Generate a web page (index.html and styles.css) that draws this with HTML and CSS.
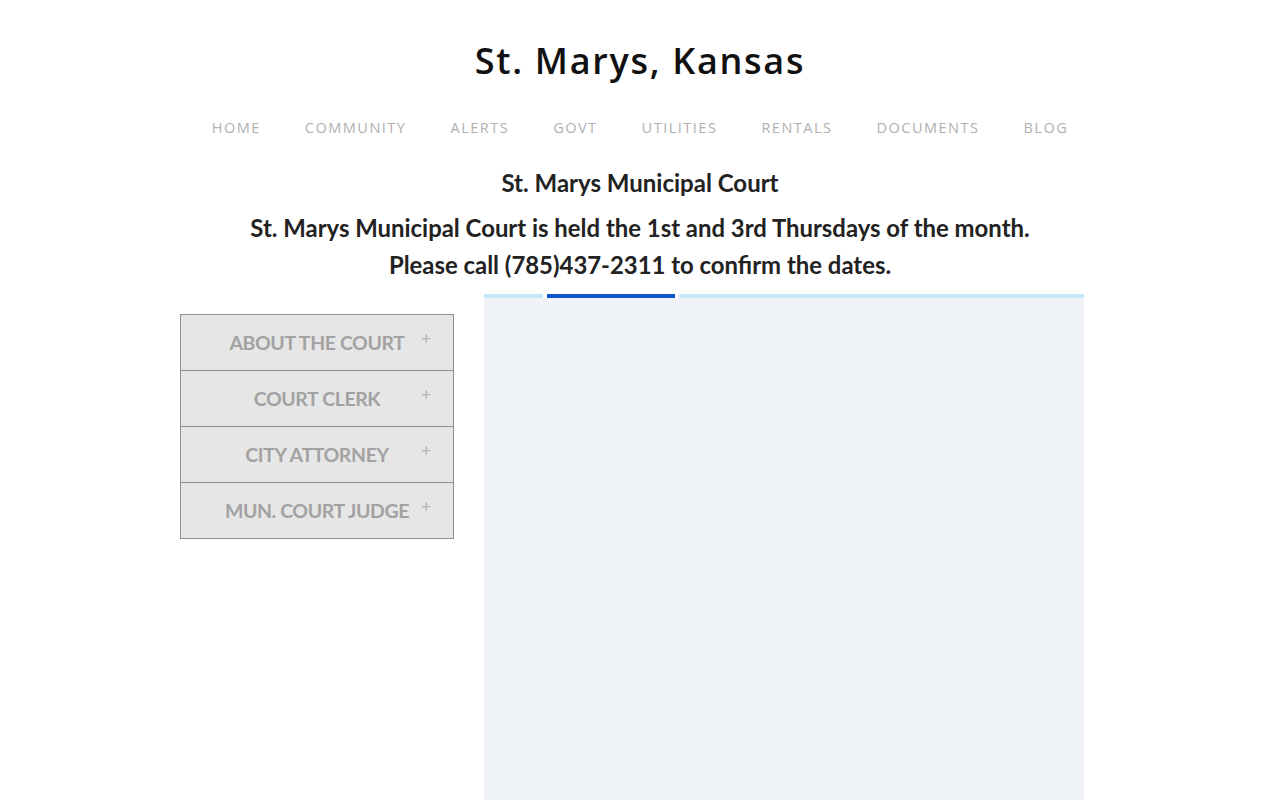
FILE: index.html
```html
<!DOCTYPE html>
<html>
<head>
<meta charset="utf-8">
<link rel="stylesheet" href="styles.css">
</head>
<body>
<header class="header">
  <h1 class="site-title">St. Marys, Kansas</h1>
  <nav class="nav">
    <a>HOME</a><a>COMMUNITY</a><a>ALERTS</a><a>GOVT</a><a>UTILITIES</a><a>RENTALS</a><a>DOCUMENTS</a><a>BLOG</a>
  </nav>
</header>
<main class="main">
  <h2 class="court-title">St. Marys Municipal Court</h2>
  <p class="court-info">St. Marys Municipal Court is held the 1st and 3rd Thursdays of the month.<br>Please call (785)437-2311 to confirm the dates.</p>
  <div class="columns">
    <div class="accordion">
      <div class="acc-item"><span class="acc-label">ABOUT THE COURT</span><span class="acc-plus">+</span></div>
      <div class="acc-item"><span class="acc-label">COURT CLERK</span><span class="acc-plus">+</span></div>
      <div class="acc-item"><span class="acc-label">CITY ATTORNEY</span><span class="acc-plus">+</span></div>
      <div class="acc-item"><span class="acc-label">MUN. COURT JUDGE</span><span class="acc-plus">+</span></div>
    </div>
    <div class="panel">
      <div class="progress">
        <div class="seg seg-a"></div>
        <div class="seg seg-b"></div>
        <div class="seg seg-c"></div>
      </div>
      <div class="panel-body"></div>
    </div>
  </div>
</main>
</body>
</html>
```
FILE: styles.css
```css
html, body { margin: 0; padding: 0; background: #fff; }
body { font-family: Lato, "Open Sans", sans-serif; color: #222; }
.header { text-align: center; padding-top: 38px; }
.site-title {
  margin: 0;
  font-family: "Open Sans", sans-serif;
  font-weight: 600;
  font-size: 36px;
  line-height: 46px;
  letter-spacing: 1.7px;
  color: #111;
}
.nav {
  display: flex;
  justify-content: center;
  gap: 44px;
  margin-top: 34px;
  font-family: "Open Sans", sans-serif;
  font-size: 14.5px;
  letter-spacing: 1.5px;
  line-height: 20px;
  color: #b0b0b0;
}
.nav a { display: block; }
.main { width: 920px; margin: 0 auto; padding-top: 28px; }
.court-title {
  margin: 0;
  text-align: center;
  font-size: 24px;
  font-weight: 700;
  line-height: 34px;
  color: #222;
}
.court-info {
  margin: 9px 0 0;
  text-align: center;
  font-size: 23.9px;
  font-weight: 700;
  line-height: 37px;
  color: #222;
}
.columns { display: flex; gap: 30px; margin-top: 11px; align-items: flex-start; }
.accordion { width: 274px; margin-top: 20px; border: 1px solid #8f8f8f; box-sizing: border-box; }
.acc-item {
  height: 56px;
  background: #e6e6e6;
  border-top: 1px solid #8f8f8f;
  box-sizing: border-box;
  display: flex;
  align-items: center;
  justify-content: center;
  position: relative;
  font-weight: 700;
  font-size: 19.5px;
  color: #a2a2a2;
  letter-spacing: -0.4px;
}
.acc-item:first-child { border-top: 0; height: 55px; }
.acc-plus {
  position: absolute;
  left: 240px;
  top: 12px;
  font-weight: 400;
  font-size: 18px;
  color: #b5b5b5;
}
.panel { width: 600px; }
.progress { display: flex; gap: 4px; height: 4px; }
.seg { height: 4px; }
.seg-a { width: 59px; background: #c6e6fa; }
.seg-b { width: 128px; background: #0b56c8; }
.seg-c { flex: 1; background: #c6e6fa; }
.panel-body { height: 510px; background: #eff3f8; }
```
